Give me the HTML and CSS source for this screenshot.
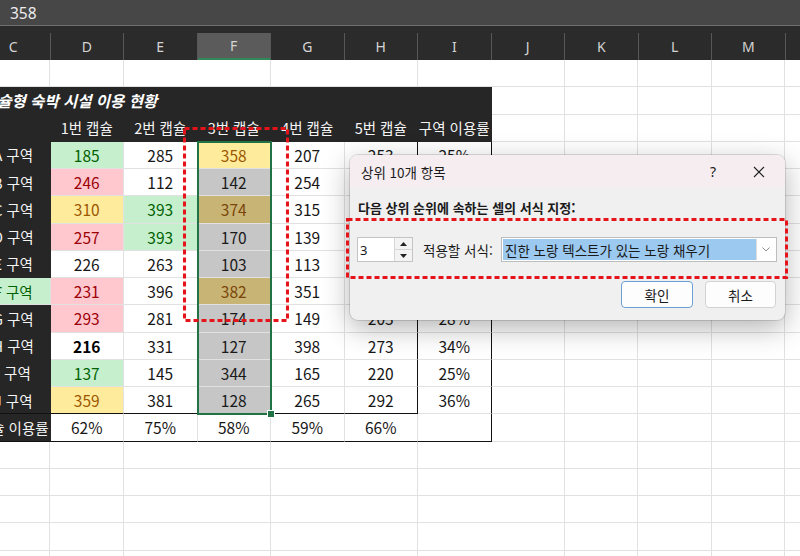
FILE: index.html
```html
<!DOCTYPE html>
<html lang="ko">
<head>
<meta charset="utf-8">
<link rel="stylesheet" href="styles.css">
</head>
<body>
<div class="app">
  <div class="fbar"><span class="fval">358</span></div>
  <div class="colhead">
    <div class="ch">C</div><div class="ch">D</div><div class="ch">E</div><div class="ch on">F</div><div class="ch">G</div><div class="ch">H</div><div class="ch">I</div><div class="ch">J</div><div class="ch">K</div><div class="ch">L</div><div class="ch">M</div><div class="ch">N</div>
  </div>
  <div class="sheet">
    <div class="tbl">
      <div class="c t">캡슐형 숙박 시설 이용 현황</div>

      <div class="c dk"></div><div class="c dk">1번 캡슐</div><div class="c dk">2번 캡슐</div><div class="c dk">3번 캡슐</div><div class="c dk">4번 캡슐</div><div class="c dk">5번 캡슐</div><div class="c dk">구역 이용률</div>

      <div class="c dk">A 구역</div><div class="c g">185</div><div class="c">285</div><div class="c y">358</div><div class="c">207</div><div class="c rb">253</div><div class="c rb">25%</div>
      <div class="c dk">B 구역</div><div class="c r">246</div><div class="c">112</div><div class="c s">142</div><div class="c">254</div><div class="c rb">312</div><div class="c rb">30%</div>
      <div class="c dk">C 구역</div><div class="c y">310</div><div class="c g">393</div><div class="c sy">374</div><div class="c">315</div><div class="c rb">188</div><div class="c rb">33%</div>
      <div class="c dk">D 구역</div><div class="c r">257</div><div class="c g">393</div><div class="c s">170</div><div class="c">139</div><div class="c rb">264</div><div class="c rb">29%</div>
      <div class="c dk">E 구역</div><div class="c">226</div><div class="c">263</div><div class="c s">103</div><div class="c">113</div><div class="c rb">175</div><div class="c rb">26%</div>
      <div class="c g lab">F 구역</div><div class="c r">231</div><div class="c">396</div><div class="c sy">382</div><div class="c">351</div><div class="c rb">240</div><div class="c rb">31%</div>
      <div class="c dk">G 구역</div><div class="c r">293</div><div class="c">281</div><div class="c s">174</div><div class="c">149</div><div class="c rb">203</div><div class="c rb">28%</div>
      <div class="c dk">H 구역</div><div class="c b">216</div><div class="c">331</div><div class="c s">127</div><div class="c">398</div><div class="c rb">273</div><div class="c rb">34%</div>
      <div class="c dk">I 구역</div><div class="c g">137</div><div class="c">145</div><div class="c s">344</div><div class="c">165</div><div class="c rb">220</div><div class="c rb">25%</div>
      <div class="c dk bb">J 구역</div><div class="c y bb">359</div><div class="c bb">381</div><div class="c s bb">128</div><div class="c bb">265</div><div class="c rb bb">292</div><div class="c rb">36%</div>

      <div class="c dk bb">캡슐 이용률</div><div class="c bb">62%</div><div class="c bb">75%</div><div class="c bb">58%</div><div class="c bb">59%</div><div class="c bb">66%</div><div class="c rb bb"></div>
    </div>
    <div class="sel"><span class="handle"></span></div>
  </div>

  <div class="dlg">
    <div class="dlg-title">
      <span class="tt">상위 10개 항목</span>
      <span class="tb q">?</span>
      <span class="tb"><svg width="12" height="12" viewBox="0 0 12 12"><path d="M1 1 L11 11 M11 1 L1 11" stroke="#222" stroke-width="1.1" fill="none"/></svg></span>
    </div>
    <div class="dlg-body">
      <div class="prompt">다음 상위 순위에 속하는 셀의 서식 지정:</div>
      <div class="frow">
        <div class="spin">
          <span class="sv">3</span>
          <span class="arrows">
            <span class="ar"><svg width="7" height="4" viewBox="0 0 7 4"><path d="M0 4 L3.5 0 L7 4 Z" fill="#222"/></svg></span>
            <span class="ar"><svg width="7" height="4" viewBox="0 0 7 4"><path d="M0 0 L3.5 4 L7 0 Z" fill="#222"/></svg></span>
          </span>
        </div>
        <span class="lbl">적용할 서식:</span>
        <div class="combo">
          <span class="selv">진한 노랑 텍스트가 있는 노랑 채우기</span>
          <span class="dd"><svg width="8" height="5" viewBox="0 0 8 5"><path d="M0.5 0.5 L4 4 L7.5 0.5" stroke="#8a8a8a" stroke-width="1" fill="none"/></svg></span>
        </div>
      </div>
      <div class="btns">
        <span class="btn def">확인</span>
        <span class="btn">취소</span>
      </div>
    </div>
  </div>

  <svg class="marks" width="800" height="556" viewBox="0 0 800 556">
    <rect x="184.5" y="128.5" width="103" height="192" fill="none" stroke="#e5141b" stroke-width="3" stroke-dasharray="5 3"/>
    <rect x="347.5" y="219.5" width="439" height="58" fill="none" stroke="#e5141b" stroke-width="3" stroke-dasharray="5 3"/>
  </svg>
</div>
</body>
</html>
```

FILE: styles.css
```css
body {
  margin: 0;
}

.app {
  position: relative;
  width: 800px;
  height: 556px;
  overflow: hidden;
  background: #fff;
  font-family: "Noto Sans CJK KR", "Noto Sans", sans-serif;
}

.fbar {
  height: 25px;
  background: #474747;
  border-bottom: 1px solid #6e6e6e;
  display: flex;
  align-items: center;
  padding-left: 10px;
  color: #ececec;
  font: 15.5px "Noto Sans", "Noto Sans CJK KR", sans-serif;
}

.colhead {
  height: 34px;
  margin-left: -23px;
  background: #2b2b2b;
  display: flex;
  align-items: flex-end;
}

.ch {
  flex: 0 0 73.5px;
  height: 27px;
  box-sizing: border-box;
  border-right: 1px solid #575757;
  display: flex;
  align-items: center;
  justify-content: center;
  color: #d4d4d4;
  font: 14px "Noto Sans", sans-serif;
}

.ch.on {
  background: #5b5b5b;
  border-bottom: 2px solid #2f8a58;
}

.sheet {
  position: relative;
  margin-left: -23px;
  height: 496px;
  box-sizing: border-box;
  padding-top: 27.25px;
  background-color: #fff;
  background-image:
    repeating-linear-gradient(to right, transparent 0 72.5px, #e1e1e1 72.5px 73.5px),
    repeating-linear-gradient(to bottom, transparent 0 26.25px, #e1e1e1 26.25px 27.25px);
}

.tbl {
  display: grid;
  grid-template-columns: repeat(7, 73.5px);
  grid-auto-rows: 27.25px;
  font-size: 15.5px;
  color: #161616;
}

.c {
  box-sizing: border-box;
  display: flex;
  align-items: center;
  justify-content: center;
  white-space: nowrap;
  overflow: hidden;
  background: #fff;
  border-right: 1px solid #e1e1e1;
  border-bottom: 1px solid #e1e1e1;
}

.t {
  grid-column: 1 / 8;
  justify-content: flex-start;
  padding-left: 6px;
  background: #262626;
  border-color: #262626;
  color: #fff;
  font-weight: bold;
  font-style: italic;
  font-size: 15.5px;
}

.dk {
  background: #262626;
  border-color: #262626;
  color: #f4f4f4;
  font-size: 14.5px;
}

.lab {
  font-size: 14.5px;
}

.g { background: #c6efce; color: #006100; }
.r { background: #ffc7ce; color: #9c0006; }
.y { background: #ffeb9c; color: #9c5700; }
.s { background: #c6c6c6; color: #1a1a1a; }
.sy { background: #c8b475; color: #7a4509; }
.b { font-weight: bold; color: #000; }

.rb { border-right: 1px solid #111; }
.bb { border-bottom: 1px solid #111; }
.dk.bb { border-bottom-color: #111; }

.sel {
  position: absolute;
  left: 219.5px;
  top: 80.75px;
  width: 75.5px;
  height: 274.5px;
  box-sizing: border-box;
  border: 2px solid #217346;
}

.handle {
  position: absolute;
  right: -5px;
  bottom: -5px;
  width: 6px;
  height: 6px;
  background: #217346;
  border: 1px solid #fff;
}

/* dialog */
.dlg {
  position: absolute;
  left: 350px;
  top: 155px;
  width: 435px;
  height: 165px;
  border-radius: 8px;
  overflow: hidden;
  background: #f0f0f0;
  box-shadow: 0 8px 28px rgba(0, 0, 0, 0.3), 0 0 0 1px rgba(0, 0, 0, 0.12);
  display: flex;
  flex-direction: column;
  font: 13px "Noto Sans CJK KR", sans-serif;
  color: #1a1a1a;
}

.dlg-title {
  height: 33px;
  flex: 0 0 33px;
  background: #f5edf0;
  display: flex;
  align-items: center;
  padding: 0 3px 0 11px;
}

.tt {
  flex: 1;
  font-size: 13.5px;
}

.tb {
  width: 46px;
  height: 33px;
  display: flex;
  align-items: center;
  justify-content: center;
}

.tb.q {
  font: 14px "Noto Sans", sans-serif;
}

.dlg-body {
  flex: 1;
  display: flex;
  flex-direction: column;
  padding: 10px 8px 12px 7px;
}

.prompt {
  font-weight: bold;
  line-height: 19px;
  padding-left: 1px;
}

.frow {
  margin-top: 20px;
  height: 25px;
  display: flex;
  align-items: center;
  font-size: 13.5px;
}

.spin {
  width: 56px;
  height: 25px;
  box-sizing: border-box;
  background: #fff;
  border: 1px solid #c4c4c4;
  display: flex;
}

.sv {
  flex: 1;
  display: flex;
  align-items: center;
  padding-left: 2px;
  font: 13px "Noto Sans", sans-serif;
}

.arrows {
  width: 17px;
  display: flex;
  flex-direction: column;
  border-left: 1px solid #d6d6d6;
  background: #f3f3f3;
}

.ar {
  flex: 1;
  display: flex;
  align-items: center;
  justify-content: center;
}

.ar + .ar {
  border-top: 1px solid #d6d6d6;
}

.lbl {
  margin-left: 10px;
}

.combo {
  margin-left: auto;
  width: 276px;
  height: 25px;
  box-sizing: border-box;
  border: 1px solid #bdbdbd;
  background: #fff;
  padding: 1px;
  display: flex;
}

.selv {
  flex: 1;
  background: #9bc9f0;
  display: flex;
  align-items: center;
  padding-left: 2px;
}

.dd {
  width: 18px;
  display: flex;
  align-items: center;
  justify-content: center;
  border-left: 1px solid #dcdcdc;
}

.btns {
  margin-top: auto;
  display: flex;
  justify-content: flex-end;
  gap: 12px;
  padding-right: 1px;
}

.btn {
  width: 71px;
  height: 27px;
  box-sizing: border-box;
  border: 1px solid #d2d2d2;
  border-radius: 4px;
  background: #fdfdfd;
  display: flex;
  align-items: center;
  justify-content: center;
  font-size: 13.5px;
}

.btn.def {
  width: 72px;
  border-color: #6d9fd6;
}

.marks {
  position: absolute;
  left: 0;
  top: 0;
  pointer-events: none;
}
```
